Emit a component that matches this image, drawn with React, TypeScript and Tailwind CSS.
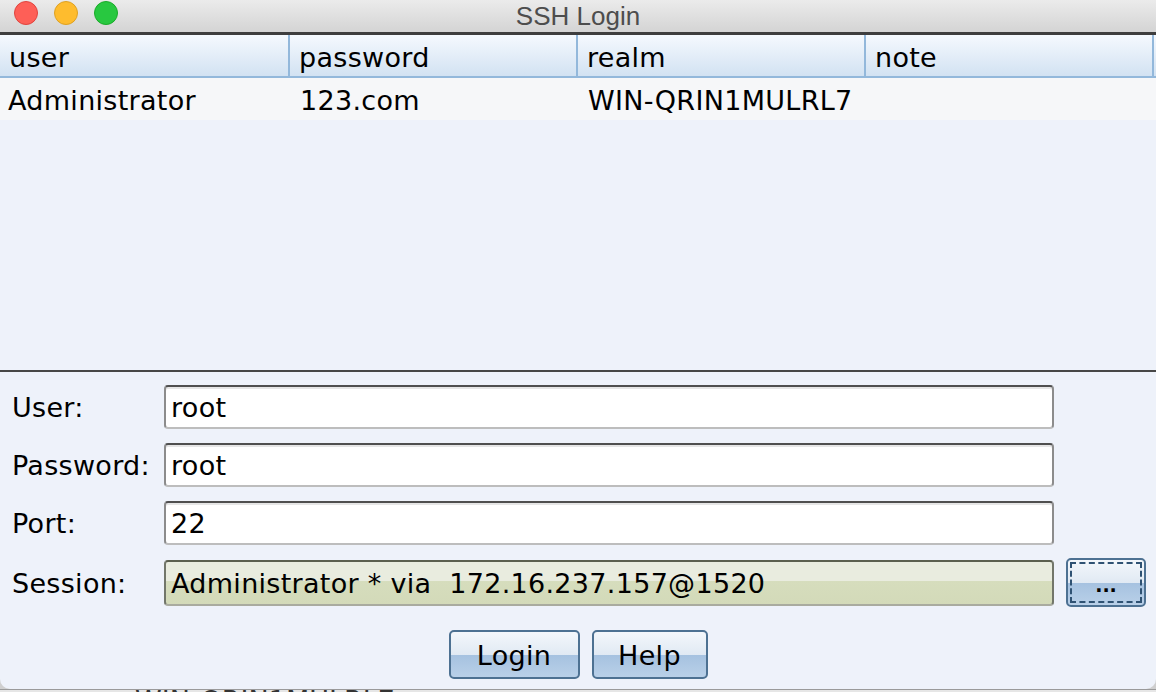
import React from "react";

const columns = ["user", "password", "realm", "note"];
const row = ["Administrator", "123.com", "WIN-QRIN1MULRL7", ""];

const fieldFont = { fontFamily: '"DejaVu Sans", "Noto Sans", sans-serif' };

const TextField = ({ value }: { value: string }) => (
  <div className="flex h-[44px] w-[890px] items-center rounded-[4px] border-2 border-t-[#4f4f4f] border-x-[#8c8c8c] border-b-[#bdbdbd] bg-white pl-[5px] pt-[3px] text-[27px] tracking-[0.3px] text-black shadow-[inset_0_2px_0_#e6e6e6]">
    {value}
  </div>
);

const AquaButton = ({ label, width }: { label: string; width: string }) => (
  <button
    className={`flex h-[49px] ${width} items-center justify-center rounded-[5px] border-2 border-[#4d7192] bg-[linear-gradient(to_bottom,#f3f7fb_0%,#e0e9f3_52%,#a6c2e0_52%,#b9d0e8_100%)] pt-[3px] text-[27px] tracking-[0.3px] text-black`}
  >
    {label}
  </button>
);

export default function App() {
  return (
    <div
      className="flex h-[692px] w-[1156px] flex-col overflow-hidden bg-[#cfcfcf]"
      style={fieldFont}
    >
      <div className="flex flex-1 flex-col overflow-hidden rounded-b-[10px] bg-[#eef2fa]">
        {/* title bar */}
        <div className="relative flex h-[32px] shrink-0 items-center justify-center bg-[linear-gradient(to_bottom,#ebebeb,#d4d4d4)]">
          <div className="absolute left-[14px] top-[1px] flex gap-[16px]">
            <span className="h-[24px] w-[24px] rounded-full border border-[#e0443e] bg-[#fe5f57]" />
            <span className="h-[24px] w-[24px] rounded-full border border-[#dea123] bg-[#febc2e]" />
            <span className="h-[24px] w-[24px] rounded-full border border-[#1aab29] bg-[#28c840]" />
          </div>
          <span
            className="text-[26px] leading-none text-[#4d4d4d]"
            style={{ fontFamily: '"Liberation Sans", Arial, sans-serif' }}
          >
            SSH Login
          </span>
        </div>
        <div className="h-[3px] shrink-0 bg-[#3e3e3e]" />

        {/* table */}
        <div className="flex h-[43px] shrink-0 border-b-2 border-[#93b8db] bg-[linear-gradient(to_bottom,#f5f9fe,#d2e2f2)]">
          {columns.map((c, i) => (
            <div
              key={c}
              className={`flex w-[288px] items-center pl-[9px] pt-[5px] text-[27px] tracking-[0.3px] text-black ${
                i === 0 ? "" : "border-l-2 border-[#93b8db]"
              }`}
            >
              {c}
            </div>
          ))}
          <div className="flex-1 border-l-2 border-[#93b8db]" />
        </div>
        <div className="flex h-[42px] shrink-0 bg-[#f6f7f9]">
          {row.map((v, i) => (
            <div
              key={i}
              className={`flex w-[288px] items-center pt-[5px] text-[27px] tracking-[0.3px] text-black ${
                i === 0 ? "pl-[8px]" : "pl-[12px]"
              }`}
            >
              {v}
            </div>
          ))}
        </div>
        <div className="h-[250px] shrink-0" />
        <div className="h-[2px] shrink-0 bg-[#474747]" />

        {/* form */}
        <div className="flex flex-1 flex-col pt-[13px]">
          <div className="flex flex-col gap-[14px]">
            {[
              ["User:", "root"],
              ["Password:", "root"],
              ["Port:", "22"],
            ].map(([label, value]) => (
              <div key={label} className="flex items-center">
                <span className="w-[164px] pl-[12px] pt-[3px] text-[27px] tracking-[0.3px] text-black">
                  {label}
                </span>
                <TextField value={value} />
              </div>
            ))}
          </div>
          <div className="mt-[13px] flex h-[49px] items-center">
            <span className="w-[164px] pl-[12px] pt-[3px] text-[27px] tracking-[0.3px] text-black">
              Session:
            </span>
            <div className="flex h-[46px] w-[890px] items-center whitespace-pre rounded-[4px] border-2 border-t-[#5b5f4f] border-x-[#72766a] border-b-[#a9ab9f] bg-[linear-gradient(to_bottom,#e9ecdf_0%,#e9ecdf_45%,#d6ddbd_45%,#d3dab9_100%)] pl-[5px] pt-[3px] text-[27px] tracking-[0.3px] text-black">
              Administrator * via  172.16.237.157@1520
            </div>
            <button className="ml-[12px] flex h-[49px] w-[80px] items-center justify-center rounded-[5px] border-2 border-[#4d7192] bg-[linear-gradient(to_bottom,#f3f7fb_0%,#e0e9f3_52%,#a6c2e0_52%,#b9d0e8_100%)] p-[2px]">
              <span className="flex h-full w-full items-end justify-center border-2 border-dashed border-[#2f5273] pb-[6px] text-[19px] font-bold leading-none text-black">
                ...
              </span>
            </button>
          </div>
          <div className="mt-[23px] flex justify-center gap-[12px]">
            <AquaButton label="Login" width="w-[131px]" />
            <AquaButton label="Help" width="w-[116px]" />
          </div>
        </div>
      </div>
      <div className="h-[3px] shrink-0 overflow-hidden border-t border-[#9a9a9a] bg-[#e6e6e6]">
        <div className="pl-[135px] text-[27px] leading-[22px] text-[#333]">
          WIN-QRIN1MULRL7
        </div>
      </div>
    </div>
  );
}
